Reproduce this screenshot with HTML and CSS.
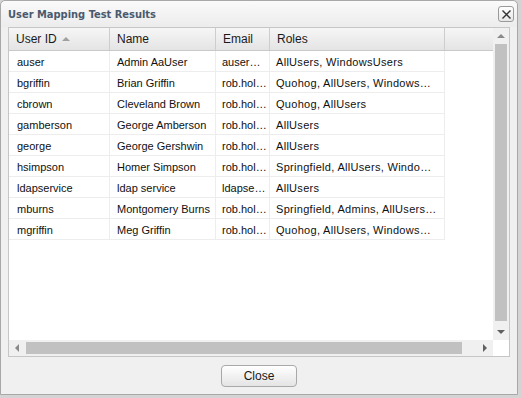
FILE: index.html
```html
<!DOCTYPE html>
<html lang="en">
<head>
    <meta charset="UTF-8" />
    <title>User Mapping Test Results</title>
    <link rel="stylesheet" href="styles.css">
</head>
<body>
<div class="dialog">
    <div class="titlebar">
        <span class="title">User Mapping Test Results</span>
        <span class="close-x">
            <svg width="11" height="11" viewBox="0 0 11 11"><path d="M1.5 1.5 L9.5 9.5 M9.5 1.5 L1.5 9.5" stroke="#333" stroke-width="1.4" fill="none"/></svg>
        </span>
    </div>

    <div class="grid">
        <div class="viewport">
            <div class="grid-head">
                <div class="hcell c1">User ID <span class="sort-up"></span></div>
                <div class="hcell c2">Name</div>
                <div class="hcell c3">Email</div>
                <div class="hcell c4">Roles</div>
                <div class="hcell filler"></div>
            </div>
            <div class="grid-body">
                <div class="row"><div class="cell c1">auser</div><div class="cell c2">Admin AaUser</div><div class="cell c3">auser@example.com</div><div class="cell c4">AllUsers, WindowsUsers</div></div>
                <div class="row"><div class="cell c1">bgriffin</div><div class="cell c2">Brian Griffin</div><div class="cell c3">rob.holland@example.com</div><div class="cell c4">Quohog, AllUsers, WindowsUsers</div></div>
                <div class="row"><div class="cell c1">cbrown</div><div class="cell c2">Cleveland Brown</div><div class="cell c3">rob.holland@example.com</div><div class="cell c4">Quohog, AllUsers</div></div>
                <div class="row"><div class="cell c1">gamberson</div><div class="cell c2">George Amberson</div><div class="cell c3">rob.holland@example.com</div><div class="cell c4">AllUsers</div></div>
                <div class="row"><div class="cell c1">george</div><div class="cell c2">George Gershwin</div><div class="cell c3">rob.holland@example.com</div><div class="cell c4">AllUsers</div></div>
                <div class="row"><div class="cell c1">hsimpson</div><div class="cell c2">Homer Simpson</div><div class="cell c3">rob.holland@example.com</div><div class="cell c4">Springfield, AllUsers, WindowsUsers</div></div>
                <div class="row"><div class="cell c1">ldapservice</div><div class="cell c2">ldap service</div><div class="cell c3">ldapservice@example.com</div><div class="cell c4">AllUsers</div></div>
                <div class="row"><div class="cell c1">mburns</div><div class="cell c2">Montgomery Burns</div><div class="cell c3">rob.holland@example.com</div><div class="cell c4">Springfield, Admins, AllUsers, WindowsUsers</div></div>
                <div class="row"><div class="cell c1">mgriffin</div><div class="cell c2">Meg Griffin</div><div class="cell c3">rob.holland@example.com</div><div class="cell c4">Quohog, AllUsers, WindowsUsers</div></div>
            </div>
        </div>
        <div class="vscroll">
            <span class="arrow up"></span>
            <span class="vthumb"></span>
            <span class="arrow down"></span>
        </div>
        <div class="hscroll">
            <span class="arrow left"></span>
            <span class="hthumb"></span>
            <span class="arrow right"></span>
        </div>
        <div class="corner"></div>
    </div>

    <div class="footer">
        <button class="close-btn">Close</button>
    </div>
</div>
</body>
</html>
```

FILE: styles.css
```css
* {
    box-sizing: border-box;
}
body {
    margin: 0;
    background: #d4d4d4;
    font-family: 'Liberation Sans', Arial, sans-serif;
    font-size: 11px;
}
.dialog {
    width: 518px;
    height: 395px;
    background: #f0f0f0;
    border: 1px solid #a8a8a8;
    border-radius: 5px 5px 0 0;
    display: flex;
    flex-direction: column;
}
.titlebar {
    height: 26px;
    display: flex;
    align-items: center;
    justify-content: space-between;
    padding: 0 3px 0 7px;
    background: linear-gradient(#fafafa, #ececec);
    border-radius: 5px 5px 0 0;
}
.title {
    font-family: 'DejaVu Sans Condensed', 'DejaVu Sans', sans-serif;
    font-weight: bold;
    font-size: 11px;
    color: #4a5a6e;
}
.close-x {
    width: 16px;
    height: 16px;
    border: 1px solid #9a9a9a;
    border-radius: 3px;
    background: linear-gradient(#ffffff, #e6e6e6);
    display: flex;
    align-items: center;
    justify-content: center;
}

/* grid panel */
.grid {
    margin: 0 7px;
    height: 330px;
    border: 1px solid #c6c6c6;
    background: #fff;
    display: grid;
    grid-template-columns: 1fr 16px;
    grid-template-rows: 1fr 16px;
}
.viewport {
    overflow: hidden;
}
.grid-head {
    display: flex;
    height: 23px;
    background: linear-gradient(#f6f6f6, #e4e4e4);
    border-bottom: 1px solid #c9c9c9;
}
.hcell {
    font-size: 12px;
    color: #1a1a1a;
    line-height: 22px;
    padding-left: 7px;
    border-right: 1px solid #cdcdcd;
    white-space: nowrap;
    flex: none;
}
.hcell.filler {
    flex: 1;
    border-right: none;
}
.sort-up {
    display: inline-block;
    width: 0;
    height: 0;
    border-left: 4px solid transparent;
    border-right: 4px solid transparent;
    border-bottom: 4px solid #a0a0a0;
    margin-left: 2px;
    vertical-align: 2px;
}
.c1 { width: 101px; }
.c2 { width: 106px; }
.c3 { width: 54px; }
.c4 { width: 175px; }
.row {
    display: flex;
    height: 21px;
    width: 436px;
    border-bottom: 1px solid #ededed;
}
.cell {
    line-height: 22px;
    padding: 0 1px 0 6px;
    color: #101010;
    border-right: 1px solid #ededed;
    white-space: nowrap;
    overflow: hidden;
    text-overflow: ellipsis;
    flex: none;
}
.grid-body .c1 { padding-left: 8px; }
.grid-body .c2 { padding-left: 7px; }
.grid-body .c4 {
    letter-spacing: 0.3px;
    padding-right: 6px;
}

/* scrollbars */
.vscroll, .hscroll {
    background: #f0f0f0;
    display: flex;
    align-items: center;
}
.vscroll {
    flex-direction: column;
    padding: 6px 0;
}
.hscroll {
    padding: 0 6px;
}
.vthumb {
    flex: 1;
    width: 12px;
    background: #c1c1c1;
    margin: 6px 0 9px;
}
.hthumb {
    flex: 1;
    height: 12px;
    background: #c1c1c1;
    margin: 0 21px 0 7px;
}
.arrow {
    width: 0;
    height: 0;
    flex: none;
}
.arrow.up {
    border-left: 4px solid transparent;
    border-right: 4px solid transparent;
    border-bottom: 4px solid #8a8a8a;
}
.arrow.down {
    border-left: 4px solid transparent;
    border-right: 4px solid transparent;
    border-top: 4px solid #606060;
}
.arrow.left {
    border-top: 4px solid transparent;
    border-bottom: 4px solid transparent;
    border-right: 4px solid #8a8a8a;
}
.arrow.right {
    border-top: 4px solid transparent;
    border-bottom: 4px solid transparent;
    border-left: 4px solid #606060;
}
.corner {
    background: #fff;
}

/* footer */
.footer {
    flex: 1;
    display: flex;
    align-items: center;
    justify-content: center;
}
.close-btn {
    width: 76px;
    height: 22px;
    font-family: 'Liberation Sans', Arial, sans-serif;
    font-size: 12px;
    color: #1a1a1a;
    border: 1px solid #a9a9a9;
    border-radius: 4px;
    background: linear-gradient(#ffffff, #e4e4e4);
    padding: 0;
}
```
